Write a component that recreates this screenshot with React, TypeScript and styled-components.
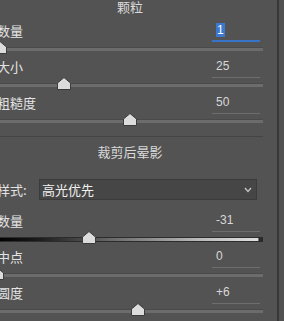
import React from 'react';
import styled, { createGlobalStyle } from 'styled-components';

const Global = createGlobalStyle`
  html, body { margin: 0; padding: 0; background: #535353; }
  body { width: 284px; height: 321px; overflow: hidden; }
`;

const Frame = styled.div`
  display: flex;
  width: 284px;
  height: 321px;
  overflow: hidden;
  background: #535353;
`;

const Panel = styled.div`
  flex: 0 0 266px;
  margin-left: -3px;
  display: flex;
  flex-direction: column;
`;

const Gutter = styled.div`
  flex: 0 0 14px;
`;

const ScrollEdge = styled.div`
  flex: 0 0 2px;
  background: #383838;
`;

const Rest = styled.div`
  flex: 1;
  background: #515151;
`;

const Header = styled.div<{ $h: number; $mt?: number }>`
  height: ${(p) => p.$h}px;
  margin-top: ${(p) => p.$mt ?? 0}px;
  text-align: center;
  font: 13px/14px 'Noto Sans CJK SC', sans-serif;
  color: #dadada;
  white-space: nowrap;
`;

const Block = styled.div`
  height: 37.5px;
  display: flex;
  flex-direction: column;
`;

const LabelRow = styled.div`
  display: flex;
  justify-content: space-between;
  align-items: flex-start;
  height: 19px;
`;

const Label = styled.span`
  font: 13px/16px 'Noto Sans CJK SC', sans-serif;
  color: #e4e4e4;
  white-space: nowrap;
`;

const Value = styled.div<{ $focus?: boolean }>`
  box-sizing: border-box;
  width: 48px;
  height: 19px;
  margin-right: 3px;
  padding-left: 4px;
  font: 12px/14px 'Liberation Sans', Arial, sans-serif;
  color: #d8d8d8;
  box-shadow: ${(p) => (p.$focus ? 'inset 0 -2px 0 #3673c9' : 'inset 0 -1px 0 #6d6d6d')};
`;

const Selected = styled.span`
  background: #3a78d2;
  color: #ffffff;
  padding: 0 1px;
`;

const Track = styled.div<{ $gradient?: boolean }>`
  position: relative;
  margin-top: 6px;
  height: 3px;
  background: ${(p) =>
    p.$gradient
      ? 'linear-gradient(90deg, #000 0%, #1a1a1a 15%, #6e6e6e 45%, #b8b8b8 75%, #e0e0e0 98%, #2a2a2a 98.5%)'
      : '#6c6c6c'};
  box-shadow: ${(p) => (p.$gradient ? '0 -1px 0 #2c2c2c, 0 1px 0 #2c2c2c' : '0 -1px 0 #4a4a4a')};
`;

const ThumbWrap = styled.div`
  position: absolute;
  top: -7px;
  width: 14px;
  height: 13px;
  display: flex;
`;

const Separator = styled.div`
  margin-top: 5px;
  height: 1px;
  background: #444444;
`;

const SelectRow = styled.div`
  display: flex;
  align-items: center;
  height: 21px;
  margin-bottom: 13px;
`;

const SelectLabel = styled.span`
  flex: 0 0 42px;
  font: 13px/16px 'Noto Sans CJK SC', sans-serif;
  color: #e4e4e4;
  white-space: nowrap;
`;

const Select = styled.div`
  box-sizing: border-box;
  width: 218px;
  height: 21px;
  display: flex;
  align-items: center;
  justify-content: space-between;
  padding: 0 4px 0 2px;
  background: #464646;
  border: 1px solid #3b3b3b;
  font: 13px/16px 'Noto Sans CJK SC', sans-serif;
  color: #f0f0f0;
`;

const Thumb = () => (
  <svg width="14" height="13" viewBox="0 0 14 13">
    <path d="M7 0.5 L13.5 6 L13.5 12.5 L0.5 12.5 L0.5 6 Z" fill="#dcdcdc" stroke="#3c3c3c" strokeWidth="1" />
  </svg>
);

const Chevron = () => (
  <svg width="8" height="6" viewBox="0 0 8 6">
    <polyline points="1,1 4,4.5 7,1" fill="none" stroke="#c4c4c4" strokeWidth="1.3" />
  </svg>
);

type SliderProps = {
  label: string;
  value: number;
  min: number;
  max: number;
  focus?: boolean;
  gradient?: boolean;
};

const TRACK_W = 266;

const Slider = ({ label, value, min, max, focus, gradient }: SliderProps) => {
  const pct = (value - min) / (max - min);
  const display = min < 0 && value > 0 ? `+${value}` : `${value}`;
  return (
    <Block>
      <LabelRow>
        <Label>{label}</Label>
        <Value $focus={focus}>{focus ? <Selected>{display}</Selected> : display}</Value>
      </LabelRow>
      <Track $gradient={gradient}>
        <ThumbWrap style={{ left: pct * TRACK_W - 7 }}>
          <Thumb />
        </ThumbWrap>
      </Track>
    </Block>
  );
};

export default function App() {
  return (
    <>
      <Global />
      <Frame>
        <Panel>
          <Header $h={24}>颗粒</Header>
          <Slider label="数量" value={1} min={0} max={100} focus />
          <Slider label="大小" value={25} min={0} max={100} />
          <Slider label="粗糙度" value={50} min={0} max={100} />
          <Separator />
          <Header $h={35.5} $mt={8}>裁剪后晕影</Header>
          <SelectRow>
            <SelectLabel>样式:</SelectLabel>
            <Select>
              <span>高光优先</span>
              <Chevron />
            </Select>
          </SelectRow>
          <Slider label="数量" value={-31} min={-100} max={100} gradient />
          <Slider label="中点" value={0} min={0} max={100} />
          <Slider label="圆度" value={6} min={-100} max={100} />
        </Panel>
        <Gutter />
        <ScrollEdge />
        <Rest />
      </Frame>
    </>
  );
}
